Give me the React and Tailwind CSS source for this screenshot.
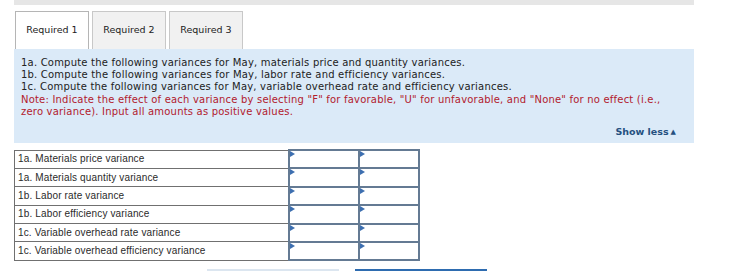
import React from 'react';

const rows = [
  '1a. Materials price variance',
  '1a. Materials quantity variance',
  '1b. Labor rate variance',
  '1b. Labor efficiency variance',
  '1c. Variable overhead rate variance',
  '1c. Variable overhead efficiency variance',
];

const Cell = ({ w }) => (
  <td className={`relative border-2 border-[#647a93] p-0 ${w}`}>
    <span className="absolute left-0 top-0 w-0 h-0 border-t-[3px] border-b-[3px] border-l-[5px] border-t-transparent border-b-transparent border-l-[#3d6fb0]" />
  </td>
);

export default function App() {
  return (
    <div className="w-[736px] h-[271px] overflow-hidden bg-white pl-[14px]" style={{ fontFamily: 'Verdana, "DejaVu Sans", sans-serif' }}>
      <div className="w-[680px] h-[5px] bg-[#e6e6e6]" />
      <div className="flex gap-[3px] mt-[6px] pl-[1px] h-[38px]">
        <div className="w-[74px] border border-b-0 border-[#b5b5b5] bg-white flex items-center justify-center text-[9.5px] text-[#222]">Required 1</div>
        <div className="w-[74px] border border-b-0 border-[#c8c8c8] bg-[#f1f1f1] flex items-center justify-center text-[9.5px] text-[#222]">Required 2</div>
        <div className="w-[74px] border border-b-0 border-[#c8c8c8] bg-[#f1f1f1] flex items-center justify-center text-[9.5px] text-[#222]">Required 3</div>
      </div>
      <div className="w-[680px] h-[94px] bg-[#dbeaf8] pl-[7px] pr-[16px] pt-[8px] text-[10px] leading-[12.2px] tracking-[0.2px] text-[#222] relative">
        <p>1a. Compute the following variances for May, materials price and quantity variances.</p>
        <p>1b. Compute the following variances for May, labor rate and efficiency variances.</p>
        <p>1c. Compute the following variances for May, variable overhead rate and efficiency variances.</p>
        <p className="text-[#b2202d]">Note: Indicate the effect of each variance by selecting "F" for favorable, "U" for unfavorable, and "None" for no effect (i.e., zero variance). Input all amounts as positive values.</p>
        <div className="absolute right-[18px] bottom-[5px] text-[9.5px] tracking-normal font-bold text-[#25507f] flex items-center gap-[2px]">
          Show less<span className="text-[7px]">▲</span>
        </div>
      </div>
      <table className="mt-[6px] border-collapse w-[404px] table-fixed" style={{ fontFamily: '"Liberation Sans", Arial, sans-serif' }}>
        <tbody>
          {rows.map((r) => (
            <tr key={r} className="h-[18.4px]">
              <td className="w-[274px] border border-[#707070] pl-[3px] text-[10px] tracking-[0.15px] text-[#2a2a2a] leading-none">{r}</td>
              <Cell w="w-[70px]" />
              <Cell w="w-[60px]" />
            </tr>
          ))}
        </tbody>
      </table>
      <div className="flex gap-[16px] mt-[8px] pl-[193px]">
        <div className="w-[132px] h-[10px] bg-[#dce6f0]" />
        <div className="w-[132px] h-[10px] bg-[#2e6cb0]" />
      </div>
    </div>
  );
}
